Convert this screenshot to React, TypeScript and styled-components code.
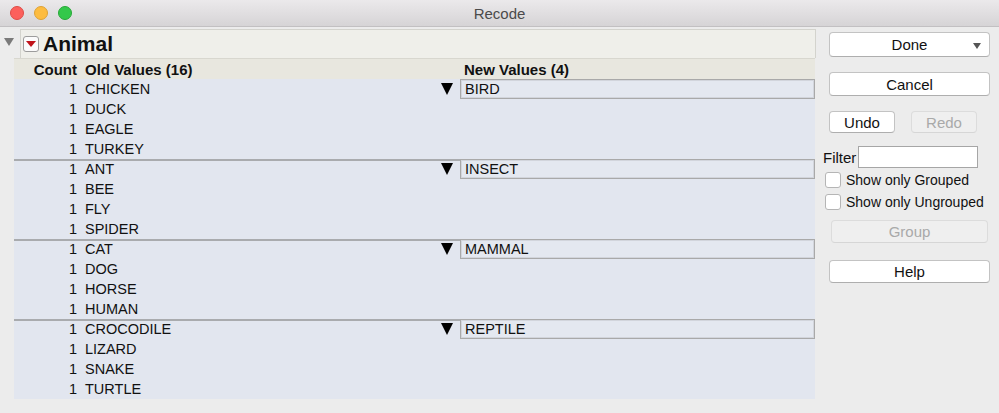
import React from "react";
import styled, { createGlobalStyle } from "styled-components";

const Global = createGlobalStyle`
  html, body { margin: 0; padding: 0; background: #ececec; }
  body { font-family: "Liberation Sans", Arial, sans-serif; color: #111; }
  * { box-sizing: border-box; }
`;

const Window = styled.div`
  width: 999px;
  height: 413px;
  background: #ececec;
  display: flex;
  flex-direction: column;
  overflow: hidden;
`;

const TitleBar = styled.div`
  height: 27px;
  flex: none;
  background: linear-gradient(#ebe9eb, #d6d4d6);
  border-bottom: 1px solid #c2c0c2;
  display: flex;
  align-items: center;
  position: relative;
`;

const Lights = styled.div`
  display: flex;
  gap: 10px;
  padding-left: 10px;
  margin-top: -1px;
`;

const Light = styled.span<{ $bg: string; $bd: string }>`
  width: 14px;
  height: 14px;
  border-radius: 50%;
  background: ${(p) => p.$bg};
  border: 1px solid ${(p) => p.$bd};
`;

const Title = styled.div`
  position: absolute;
  left: 0;
  right: 0;
  top: 0;
  bottom: 0;
  display: flex;
  align-items: center;
  justify-content: center;
  font-size: 15px;
  color: #4b4b4b;
  pointer-events: none;
`;

const Body = styled.div`
  flex: 1;
  display: flex;
`;

const Left = styled.div`
  width: 816px;
  display: flex;
`;

const DiscCol = styled.div`
  width: 14px;
  display: flex;
  align-items: flex-start;
  padding: 11px 0 0 4px;
`;

const Content = styled.div`
  flex: 1;
  display: flex;
  flex-direction: column;
`;

const HeaderBox = styled.div`
  margin: 2px 0 0 6px;
  height: 29px;
  border: 1px solid #d3d3cd;
  border-bottom: none;
  background: #efefea;
  display: flex;
  align-items: center;
  padding-left: 2px;
  gap: 4px;
`;

const RedMenu = styled.span`
  width: 16px;
  height: 16px;
  border: 1px solid #9c9c9c;
  border-radius: 3px;
  background: #fbfbfb;
  display: flex;
  align-items: center;
  justify-content: center;
`;

const HeaderTitle = styled.span`
  font-weight: bold;
  font-size: 21px;
`;

const Table = styled.div`
  width: 801px;
  display: flex;
  flex-direction: column;
`;

const Grid = styled.div`
  display: grid;
  grid-template-columns: 66px 1fr 22px 355px;
  align-items: center;
  height: 20px;
`;

const HeadRow = styled(Grid)`
  height: 21px;
  background: #e8e7df;
  border-top: 1px solid #d8d7cf;
  font-weight: bold;
  font-size: 15px;
`;

const Row = styled(Grid)<{ $line: boolean }>`
  background: #e2e6ef;
  font-size: 14.5px;
  box-shadow: ${(p) => (p.$line ? "inset 0 2px 0 #a9abae" : "none")};
`;

const CountCell = styled.div`
  text-align: right;
  padding-right: 3px;
`;

const OldCell = styled.div`
  padding-left: 5px;
  white-space: nowrap;
`;

const ArrowCell = styled.div`
  display: flex;
  align-items: center;
  padding-left: 3px;
`;

const NewCell = styled.div`
  padding-left: 4px;
`;

const NewSlot = styled.div`
  align-self: stretch;
  display: flex;
`;

const NewBox = styled.div`
  flex: 1;
  border: 1px solid #a9a9a9;
  box-shadow: inset 0 0 0 1px #d2d5dc;
  background: #e4e8f0;
  padding-left: 4px;
  display: flex;
  align-items: center;
`;

const Right = styled.div`
  flex: 1;
  display: flex;
  flex-direction: column;
  padding: 5px 0 0 13px;
`;

const Button = styled.div<{ $w?: number; $h: number; $mt: number; $ml?: number; $disabled?: boolean }>`
  width: ${(p) => (p.$w ? `${p.$w}px` : "161px")};
  height: ${(p) => p.$h}px;
  margin-top: ${(p) => p.$mt}px;
  margin-left: ${(p) => p.$ml ?? 0}px;
  border-radius: 4px;
  border: 1px solid ${(p) => (p.$disabled ? "#dcdcdc" : "#c3c3c3")};
  border-bottom-color: ${(p) => (p.$disabled ? "#d6d6d6" : "#aeaeae")};
  background: ${(p) => (p.$disabled ? "#efefef" : "#ffffff")};
  color: ${(p) => (p.$disabled ? "#a9a9a9" : "#111")};
  font-size: 15px;
  display: flex;
  align-items: center;
  justify-content: center;
  position: relative;
`;

const DropCaret = styled.span`
  position: absolute;
  right: 8px;
  top: 10px;
  display: flex;
`;

const ButtonRow = styled.div<{ $mt: number }>`
  display: flex;
  gap: 16px;
  margin-top: ${(p) => p.$mt}px;
`;

const FilterRow = styled.div`
  display: flex;
  align-items: center;
  margin: 13px 0 0 -6px;
  font-size: 15px;
`;

const FilterInput = styled.div`
  width: 120px;
  height: 22px;
  border: 1px solid #a6a6a6;
  background: #fff;
  margin-left: 2px;
`;

const CheckRow = styled.div<{ $mt: number }>`
  display: flex;
  align-items: center;
  gap: 5px;
  margin: ${(p) => p.$mt}px 0 0 -4px;
  height: 16px;
  font-size: 14px;
  white-space: nowrap;
`;

const CheckBox = styled.span`
  width: 16px;
  height: 16px;
  border: 1px solid #b5b5b5;
  border-radius: 3px;
  background: #fff;
`;

const groups = [
  { name: "BIRD", items: ["CHICKEN", "DUCK", "EAGLE", "TURKEY"] },
  { name: "INSECT", items: ["ANT", "BEE", "FLY", "SPIDER"] },
  { name: "MAMMAL", items: ["CAT", "DOG", "HORSE", "HUMAN"] },
  { name: "REPTILE", items: ["CROCODILE", "LIZARD", "SNAKE", "TURTLE"] },
];

export default function App() {
  return (
    <Window>
      <Global />
      <TitleBar>
        <Lights>
          <Light $bg="#fc605c" $bd="#de4b46" />
          <Light $bg="#fdbc40" $bd="#dea235" />
          <Light $bg="#34c84a" $bd="#27a837" />
        </Lights>
        <Title>Recode</Title>
      </TitleBar>
      <Body>
        <Left>
          <DiscCol>
            <svg width="10" height="8" viewBox="0 0 10 8" style={{ display: "block" }}>
              <polygon points="0,0 10,0 5,8" fill="#7a7a7a" />
            </svg>
          </DiscCol>
          <Content>
            <HeaderBox>
              <RedMenu>
                <svg width="10" height="6" viewBox="0 0 10 6">
                  <polygon points="0,0 10,0 5,6" fill="#c0131a" />
                </svg>
              </RedMenu>
              <HeaderTitle>Animal</HeaderTitle>
            </HeaderBox>
            <Table>
              <HeadRow>
                <CountCell>Count</CountCell>
                <OldCell>Old Values (16)</OldCell>
                <div />
                <NewCell>New Values (4)</NewCell>
              </HeadRow>
              {groups.map((g, gi) =>
                g.items.map((it, ii) => (
                  <Row key={it} $line={ii === 0 && gi > 0}>
                    <CountCell>1</CountCell>
                    <OldCell>{it}</OldCell>
                    <ArrowCell>
                      {ii === 0 && (
                        <svg width="12" height="12" viewBox="0 0 12 12">
                          <polygon points="0,0 12,0 6,12" fill="#000" />
                        </svg>
                      )}
                    </ArrowCell>
                    <NewSlot>{ii === 0 && <NewBox>{g.name}</NewBox>}</NewSlot>
                  </Row>
                ))
              )}
            </Table>
          </Content>
        </Left>
        <Right>
          <Button $h={25} $mt={0}>
            Done
            <DropCaret>
              <svg width="8" height="6" viewBox="0 0 8 6">
                <polygon points="0,0 8,0 4,6" fill="#555" />
              </svg>
            </DropCaret>
          </Button>
          <Button $h={24} $mt={15}>Cancel</Button>
          <ButtonRow $mt={15}>
            <Button $w={66} $h={22} $mt={0}>Undo</Button>
            <Button $w={66} $h={22} $mt={0} $disabled>Redo</Button>
          </ButtonRow>
          <FilterRow>
            Filter
            <FilterInput />
          </FilterRow>
          <CheckRow $mt={4}>
            <CheckBox />
            Show only Grouped
          </CheckRow>
          <CheckRow $mt={6}>
            <CheckBox />
            Show only Ungrouped
          </CheckRow>
          <Button $w={157} $h={23} $mt={10} $ml={2} $disabled>
            Group
          </Button>
          <Button $h={23} $mt={17}>Help</Button>
        </Right>
      </Body>
    </Window>
  );
}
